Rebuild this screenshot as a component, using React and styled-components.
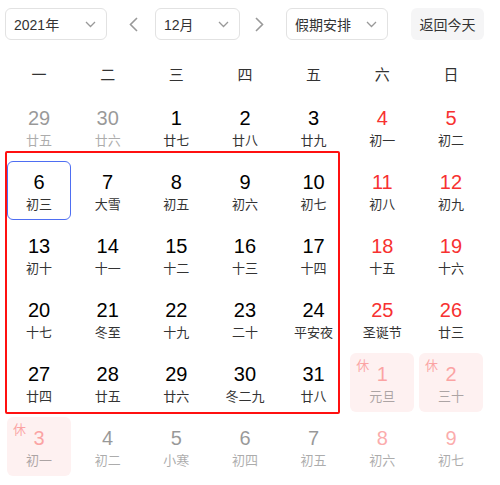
import styled, { createGlobalStyle, css } from "styled-components";

const GlobalStyle = createGlobalStyle`
  body {
    margin: 0;
    background: #fff;
    font-family: "Liberation Sans", Arial, "Noto Sans CJK SC", sans-serif;
    color: #333;
  }
`;

const Page = styled.div`
  position: relative;
  width: 500px;
  height: 485px;
  padding: 8px 0 0 5px;
  box-sizing: border-box;
`;

const Toolbar = styled.div`
  display: flex;
  align-items: center;
  height: 32px;
`;

const Select = styled.div`
  display: flex;
  align-items: center;
  justify-content: space-between;
  box-sizing: border-box;
  width: ${(p) => p.$width}px;
  height: 32px;
  padding: 0 10px 0 8px;
  border: 1px solid #e2e2e2;
  border-radius: 6px;
  font-size: 14px;
  color: #333;
`;

const Arrow = styled.div`
  display: flex;
  align-items: center;
  justify-content: center;
  width: 16px;
  height: 32px;
  margin-left: ${(p) => p.$ml}px;
  margin-right: ${(p) => p.$mr}px;
`;

const TodayButton = styled.div`
  display: flex;
  align-items: center;
  justify-content: center;
  width: 73px;
  height: 32px;
  margin-left: 23px;
  border-radius: 6px;
  background: #f5f5f6;
  font-size: 14px;
  color: #333;
`;

const Grid = styled.div`
  display: grid;
  grid-template-columns: repeat(7, 64px);
  column-gap: 4.67px;
  margin-left: 2px;
`;

const Weekdays = styled(Grid)`
  margin-top: 24px;
  margin-bottom: 11px;
`;

const Weekday = styled.div`
  height: 22px;
  line-height: 22px;
  text-align: center;
  font-size: 15px;
  color: #333;
`;

const Days = styled(Grid)`
  grid-auto-rows: 59px;
  row-gap: 5px;
`;

const Cell = styled.div`
  position: relative;
  display: flex;
  flex-direction: column;
  align-items: center;
  box-sizing: border-box;
  padding-top: 8px;
  border-radius: 6px;
  border: 1px solid transparent;
  ${(p) => p.$rest && css`background: #fef1f1;`}
  ${(p) => p.$selected && css`border: 1.5px solid #4e6ef2; padding-top: 7.5px;`}
  ${(p) => p.$faded && css`
    & > * { opacity: 0.4; }
  `}
`;

const Num = styled.div`
  height: 24px;
  line-height: 24px;
  font-size: 20px;
  color: ${(p) => (p.$red ? "#f73131" : "#000")};
`;

const Lunar = styled.div`
  margin-top: 2px;
  height: 18px;
  line-height: 18px;
  font-size: 13px;
  color: #333;
`;

const RestTag = styled.span`
  position: absolute;
  left: 5px;
  top: 5px;
  font-size: 13px;
  line-height: 14px;
  color: #f73131;
`;

const Highlight = styled.div`
  position: absolute;
  left: 5px;
  top: 151px;
  width: 335px;
  height: 263px;
  box-sizing: border-box;
  border: 2px solid #ff1010;
  border-radius: 2px;
  pointer-events: none;
`;

const Chevron = () => (
  <svg width="11" height="7" viewBox="0 0 11 7">
    <polyline points="1,1 5.5,5.5 10,1" fill="none" stroke="#999" strokeWidth="1.3" />
  </svg>
);

const weekdays = ["一", "二", "三", "四", "五", "六", "日"];

const rows = [
  [["29", "廿五", 1], ["30", "廿六", 1], ["1", "廿七"], ["2", "廿八"], ["3", "廿九"], ["4", "初一"], ["5", "初二"]],
  [["6", "初三"], ["7", "大雪"], ["8", "初五"], ["9", "初六"], ["10", "初七"], ["11", "初八"], ["12", "初九"]],
  [["13", "初十"], ["14", "十一"], ["15", "十二"], ["16", "十三"], ["17", "十四"], ["18", "十五"], ["19", "十六"]],
  [["20", "十七"], ["21", "冬至"], ["22", "十九"], ["23", "二十"], ["24", "平安夜"], ["25", "圣诞节"], ["26", "廿三"]],
  [["27", "廿四"], ["28", "廿五"], ["29", "廿六"], ["30", "冬二九"], ["31", "廿八"], ["1", "元旦", 1, 1], ["2", "三十", 1, 1]],
  [["3", "初一", 1, 1], ["4", "初二", 1], ["5", "小寒", 1], ["6", "初四", 1], ["7", "初五", 1], ["8", "初六", 1], ["9", "初七", 1]],
];

export default function App() {
  return (
    <Page>
      <GlobalStyle />
      <Toolbar>
        <Select $width={102}>
          <span>2021年</span>
          <Chevron />
        </Select>
        <Arrow $ml={18} $mr={14}>
          <svg width="9" height="15" viewBox="0 0 9 15">
            <polyline points="8,1 1.5,7.5 8,14" fill="none" stroke="#999" strokeWidth="1.6" />
          </svg>
        </Arrow>
        <Select $width={85}>
          <span>12月</span>
          <Chevron />
        </Select>
        <Arrow $ml={11} $mr={19}>
          <svg width="9" height="15" viewBox="0 0 9 15">
            <polyline points="1,1 7.5,7.5 1,14" fill="none" stroke="#999" strokeWidth="1.6" />
          </svg>
        </Arrow>
        <Select $width={102}>
          <span>假期安排</span>
          <Chevron />
        </Select>
        <TodayButton>返回今天</TodayButton>
      </Toolbar>

      <Weekdays>
        {weekdays.map((w) => (
          <Weekday key={w}>{w}</Weekday>
        ))}
      </Weekdays>

      <Days>
        {rows.map((row, r) =>
          row.map(([num, lunar, faded, rest], c) => (
            <Cell
              key={r + "-" + c}
              $faded={!!faded}
              $rest={!!rest}
              $selected={r === 1 && c === 0}
            >
              {rest ? <RestTag>休</RestTag> : null}
              <Num $red={c >= 5 || !!rest}>{num}</Num>
              <Lunar>{lunar}</Lunar>
            </Cell>
          ))
        )}
      </Days>

      <Highlight />
    </Page>
  );
}
